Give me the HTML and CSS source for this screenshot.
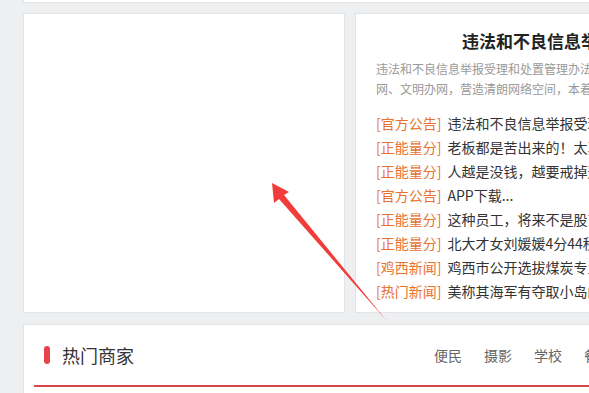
FILE: index.html
```html
<!DOCTYPE html>
<html lang="zh-CN">
<head>
  <meta charset="UTF-8">
  <title>首页</title>
  <link rel="stylesheet" href="styles.css">
</head>
<body>
  <div class="page">
    <div class="prev-card"></div>

    <div class="row">
      <div class="card banner"></div>

      <div class="card notice">
        <h2 class="notice-title">违法和不良信息举报受理和处置管理办法</h2>
        <p class="notice-desc">
          <span>违法和不良信息举报受理和处置管理办法，为进一步推动依法办</span>
          <span>网、文明办网，营造清朗网络空间，本着公开、公正、公平的原则</span>
        </p>
        <ul class="news">
          <li><span class="tag">[官方公告]</span>违法和不良信息举报受理和处置管理办法</li>
          <li><span class="tag">[正能量分]</span>老板都是苦出来的！太真实了</li>
          <li><span class="tag">[正能量分]</span>人越是没钱，越要戒掉这些习惯</li>
          <li><span class="tag">[官方公告]</span>APP下载...</li>
          <li><span class="tag">[正能量分]</span>这种员工，将来不是股东就是老板</li>
          <li><span class="tag">[正能量分]</span>北大才女刘媛媛4分44秒演讲</li>
          <li><span class="tag">[鸡西新闻]</span>鸡西市公开选拔煤炭专业技术人才</li>
          <li><span class="tag">[热门新闻]</span>美称其海军有夺取小岛的能力</li>
        </ul>
      </div>
    </div>

    <div class="card shops">
      <div class="shops-head">
        <span class="bar"></span>
        <h3>热门商家</h3>
        <nav class="shops-nav">
          <a>便民</a>
          <a>摄影</a>
          <a>学校</a>
          <a>餐饮</a>
          <a>更多</a>
        </nav>
      </div>
    </div>
  </div>

  <!-- 标注箭头 -->
  <svg class="arrow" width="589" height="393" viewBox="0 0 589 393">
    <polygon points="272,183 289,192 284,195 386,320 279,199 274,203" fill="#f23b3b"/>
  </svg>
</body>
</html>
```

FILE: styles.css
```css
body {
  margin: 0;
  width: 589px;
  height: 393px;
  overflow: hidden;
  background: #eeeff1;
  font-family: "Noto Sans CJK SC", "Liberation Sans", sans-serif;
  position: relative;
}
.page {
  width: 1100px;
  padding-left: 23px;
}
.prev-card {
  height: 2px;
  background: #fff;
  border: 1px solid #e3e4e6;
  border-top: none;
}
.row {
  display: flex;
  gap: 10px;
  margin-top: 10px;
}
.card {
  background: #fff;
  border: 1px solid #e3e4e6;
}
.banner {
  width: 320px;
  height: 298px;
}
.notice {
  width: 500px;
  height: 300px;
  padding: 15px 20px 0;
  box-sizing: border-box;
  overflow: hidden;
}
.notice-title {
  margin: 0 0 6px 86px;
  font-size: 17px;
  line-height: 24px;
  font-weight: bold;
  color: #222;
  white-space: nowrap;
}
.notice-desc {
  margin: 0;
  font-size: 12px;
  line-height: 20px;
  color: #999;
}
.notice-desc span {
  display: block;
  white-space: nowrap;
}
.news {
  list-style: none;
  margin: 12px 0 0;
  padding: 0;
}
.news li {
  font-size: 14px;
  line-height: 24px;
  color: #333;
  white-space: nowrap;
}
.tag {
  color: #e8722e;
  margin-right: 6px;
}
.shops {
  margin-top: 11px;
  height: 120px;
}
.shops-head {
  display: flex;
  align-items: center;
  height: 60px;
  margin: 0 10px;
  padding-left: 10px;
  border-bottom: 2px solid #d9474a;
}
.bar {
  width: 6px;
  height: 18px;
  border-radius: 3px;
  background: #e8424a;
}
.shops-head h3 {
  margin: 0 0 0 12px;
  font-size: 18px;
  font-weight: normal;
  color: #333;
  line-height: 24px;
}
.shops-nav {
  display: flex;
  gap: 22px;
  margin-left: 300px;
}
.shops-nav a {
  font-size: 14px;
  color: #666;
  line-height: 20px;
}
.arrow {
  position: absolute;
  top: 0;
  left: 0;
  pointer-events: none;
}
```
